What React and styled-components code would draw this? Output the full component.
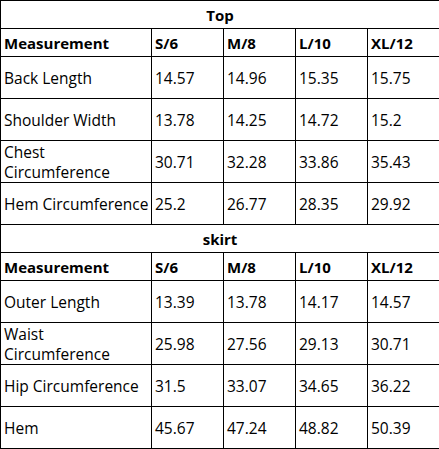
import styled, { createGlobalStyle } from "styled-components";

const GlobalStyle = createGlobalStyle`
    html, body {
        margin: 0;
        padding: 0;
        background: white;
    }
    body {
        font-family: "Open Sans", "Noto Sans", "Liberation Sans", sans-serif;
        color: #000;
    }
`;

const SizeTable = styled.table`
    border-collapse: collapse;
    table-layout: fixed;
    width: 439px;
    font-size: 15.5px;
    line-height: 20px;
`;

const Col = styled.col`
    width: ${props => props.width}px;
`;

const TitleCell = styled.td`
    border: 1px solid #000;
    height: 27px;
    padding: 0;
    text-align: center;
    font-weight: 700;
    font-size: 15px;
`;

const Row = styled.tr`
    height: ${props => props.height}px;
`;

const Cell = styled.td`
    border: 1px solid #000;
    padding: 0 0 0 3px;
    vertical-align: middle;
    white-space: nowrap;
    overflow: visible;
    font-weight: ${props => props.bold ? 700 : 400};
    font-size: ${props => props.bold ? '15px' : '15.5px'};
`;

const sections = [
    {
        title: 'Top',
        rows: [
            ['Back Length', '14.57', '14.96', '15.35', '15.75'],
            ['Shoulder Width', '13.78', '14.25', '14.72', '15.2'],
            [['Chest', 'Circumference'], '30.71', '32.28', '33.86', '35.43'],
            ['Hem Circumference', '25.2', '26.77', '28.35', '29.92'],
        ],
    },
    {
        title: 'skirt',
        rows: [
            ['Outer Length', '13.39', '13.78', '14.17', '14.57'],
            [['Waist', 'Circumference'], '25.98', '27.56', '29.13', '30.71'],
            ['Hip Circumference', '31.5', '33.07', '34.65', '36.22'],
            ['Hem', '45.67', '47.24', '48.82', '50.39'],
        ],
    },
];

const headers = ['Measurement', 'S/6', 'M/8', 'L/10', 'XL/12'];

function Label(props) {
    if (Array.isArray(props.text)) {
        return <>{props.text[0]}<br />{props.text[1]}</>;
    }
    return props.text;
}

function Section(props) {
    return (
        <>
            <tr>
                <TitleCell colSpan={5}>{props.section.title}</TitleCell>
            </tr>
            <Row height={28}>
                {headers.map(h => <Cell bold key={h}>{h}</Cell>)}
            </Row>
            {props.section.rows.map(row => (
                <Row height={42} key={Array.isArray(row[0]) ? row[0].join(' ') : row[0]}>
                    {row.map((value, index) => (
                        <Cell key={index}><Label text={value} /></Cell>
                    ))}
                </Row>
            ))}
        </>
    );
}

export default function App() {
    return (
        <>
            <GlobalStyle />
            <SizeTable>
                <colgroup>
                    <Col width={151} />
                    <Col width={72} />
                    <Col width={72} />
                    <Col width={72} />
                    <Col width={72} />
                </colgroup>
                <tbody>
                    {sections.map(s => <Section section={s} key={s.title} />)}
                </tbody>
            </SizeTable>
        </>
    );
}
